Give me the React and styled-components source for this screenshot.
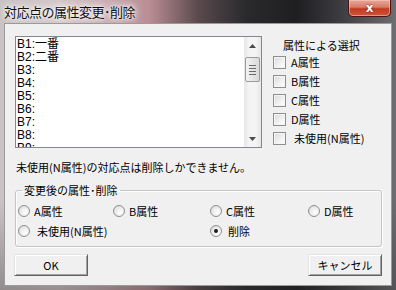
import React from 'react';
import styled, { createGlobalStyle } from 'styled-components';

const Global = createGlobalStyle`
  html, body { margin: 0; padding: 0; }
  body {
    width: 396px; height: 290px; overflow: hidden;
    font-family: "Noto Sans CJK JP", sans-serif;
    color: #000;
  }
`;

const Frame = styled.div`
  width: 396px; height: 290px;
  display: flex; flex-direction: column;
  box-sizing: border-box;
  background:
    linear-gradient(180deg, rgba(0,0,0,0) 0%, rgba(0,0,0,0) 70%, rgba(40,40,40,0.35) 100%),
    linear-gradient(90deg, #c9c2c3 0%, #d3c6c8 15%, #c9aab0 28%, #b88c92 38%, #5a4a4e 50%, #2a2a2d 62%, #1f1f22 75%, #3d3d41 86%, #6d6d72 100%);
`;

const TitleBar = styled.div`
  height: 23px; flex: none;
  display: flex; justify-content: space-between; align-items: flex-start;
  padding-left: 4px;
`;

const TitleText = styled.div`
  font-size: 13px; line-height: 24px;
  letter-spacing: -0.5px;
  color: #111;
  text-shadow: 0 0 6px #fff, 0 0 10px #fff, 0 0 3px #fff;
`;

const CloseButton = styled.div`
  width: 43px; height: 17px; margin-right: 5px;
  box-sizing: border-box;
  border: 1px solid #4a1410; border-top: none;
  border-radius: 0 0 5px 5px;
  background: linear-gradient(180deg, #e8a89a 0%, #d77a66 45%, #c23a22 55%, #d0553a 100%);
  box-shadow: inset 0 0 0 1px rgba(255,210,200,0.5);
  display: flex; align-items: center; justify-content: center;
  color: #fff; font-family: "DejaVu Sans", sans-serif; font-weight: bold; font-size: 12px;
  text-shadow: 0 0 2px #600;
`;

const Body = styled.div`
  flex: 1; display: flex;
  padding: 0 4px 4px 4px;
`;

const Client = styled.div`
  flex: 1;
  background: #f0f0f0;
  border: 1px solid #9a9a9a;
  padding: 12px 9px 0 10px;
  display: flex; flex-direction: column;
  font-size: 11px;
`;

const TopRow = styled.div`
  display: flex; height: 112px; gap: 10px;
`;

const ListBox = styled.div`
  width: 247px; height: 112px; box-sizing: border-box;
  border: 1px solid #828790; background: #fff;
  display: flex;
`;

const Items = styled.div`
  flex: 1; overflow: hidden; padding: 1px 0 0 1px;
`;

const Item = styled.div`
  height: 13px; line-height: 13px;
  font-family: "Liberation Sans", "Noto Sans CJK JP", sans-serif;
  font-size: 12px; white-space: nowrap;
`;

const ScrollBar = styled.div`
  width: 17px; display: flex; flex-direction: column;
  background: linear-gradient(90deg, #e6e6e6, #f4f4f4 30%, #f4f4f4 70%, #e6e6e6);
`;

const Arrow = styled.div`
  height: 17px; flex: none;
  display: flex; align-items: center; justify-content: center;
`;

const Track = styled.div`
  flex: 1; padding-top: 3px;
`;

const Thumb = styled.div`
  margin: 0 1px; height: 25px; box-sizing: border-box;
  border: 1px solid #9b9b9b; border-radius: 2px;
  background: linear-gradient(90deg, #f3f3f3, #e6e6e6 50%, #d9d9d9);
  display: flex; flex-direction: column; align-items: center; justify-content: center; gap: 2px;
`;

const Grip = styled.div`
  width: 7px; height: 1px; background: #6a6a6a;
`;

const SidePanel = styled.div`
  width: 110px; display: flex; flex-direction: column;
`;

const SideHeading = styled.div`
  height: 16px; line-height: 16px; padding: 1px 0 0 11px;
`;

const CheckRow = styled.div`
  height: 19.3px; display: flex; align-items: center;
`;

const CheckBox = styled.div`
  width: 13px; height: 13px; box-sizing: border-box; flex: none;
  margin-left: 1px;
  border: 1px solid #8e8f8f;
  background: linear-gradient(135deg, #dadada, #f6f6f6 70%, #fff);
  box-shadow: inset 0 0 0 1px #f4f4f4;
`;

const Label = styled.span`
  margin-left: ${p => p.$gap || 3}px; white-space: nowrap; line-height: 13px;
`;

const Message = styled.div`
  margin-top: 12px; height: 14px; line-height: 14px; padding-left: 1px;
`;

const Group = styled.fieldset`
  margin: 10px 0 0 0; padding: 2px 0 5px 2px;
  border: 1px solid #c5c5c5; border-radius: 3px;
  box-shadow: inset 1px 1px 0 #fff, 1px 1px 0 #fff;
`;

const Legend = styled.legend`
  margin-left: 4px; padding: 0 2px; font-size: 11px; line-height: 13px;
`;

const RadioGrid = styled.div`
  display: grid;
  grid-template-columns: 95px 97px 98px auto;
  grid-auto-rows: 20px;
  margin-top: 2px;
`;

const RadioItem = styled.div`
  display: flex; align-items: center;
  grid-column: ${p => (p.$wide ? 'span 2' : 'auto')};
`;

const Radio = styled.div`
  width: 12px; height: 12px; box-sizing: border-box; flex: none;
  border-radius: 50%;
  border: 1px solid #8e8f8f;
  background: radial-gradient(circle at 65% 65%, #fff, #e8e8e8 60%, #cfcfcf);
  display: flex; align-items: center; justify-content: center;
  &::after {
    content: "";
    width: 4px; height: 4px; border-radius: 50%;
    background: ${p => (p.$checked ? '#1a1a1a' : 'transparent')};
  }
`;

const ButtonRow = styled.div`
  margin-top: 7px; display: flex; justify-content: space-between;
  margin-left: -1px;
`;

const Button = styled.div`
  width: 74px; height: 22px; box-sizing: border-box;
  background: #f0f0f0;
  border-top: 1px solid #e3e3e3; border-left: 1px solid #e3e3e3;
  border-right: 1px solid #646464; border-bottom: 1px solid #646464;
  box-shadow: inset 1px 1px 0 #fff, inset -1px -1px 0 #a0a0a0;
  display: flex; align-items: center; justify-content: center;
  font-size: 11px;
`;

const items = ['B1:一番', 'B2:二番', 'B3:', 'B4:', 'B5:', 'B6:', 'B7:', 'B8:', 'B9:'];
const checks = ['A属性', 'B属性', 'C属性', 'D属性', '未使用(N属性)'];

export default function App() {
  return (
    <Frame>
      <Global />
      <TitleBar>
        <TitleText>対応点の属性変更･削除</TitleText>
        <CloseButton>x</CloseButton>
      </TitleBar>
      <Body>
        <Client>
          <TopRow>
            <ListBox>
              <Items>
                {items.map(t => <Item key={t}>{t}</Item>)}
              </Items>
              <ScrollBar>
                <Arrow>
                  <svg width="7" height="4" viewBox="0 0 7 4"><path d="M0 4 L3.5 0 L7 4 Z" fill="#4a4a4a" /></svg>
                </Arrow>
                <Track>
                  <Thumb><Grip /><Grip /><Grip /><Grip /></Thumb>
                </Track>
                <Arrow>
                  <svg width="7" height="4" viewBox="0 0 7 4"><path d="M0 0 L3.5 4 L7 0 Z" fill="#4a4a4a" /></svg>
                </Arrow>
              </ScrollBar>
            </ListBox>
            <SidePanel>
              <SideHeading>属性による選択</SideHeading>
              {checks.map((c, i) => (
                <CheckRow key={c}>
                  <CheckBox />
                  <Label $gap={i === 4 ? 8 : 5}>{c}</Label>
                </CheckRow>
              ))}
            </SidePanel>
          </TopRow>
          <Message>未使用(N属性)の対応点は削除しかできません。</Message>
          <Group>
            <Legend>変更後の属性･削除</Legend>
            <RadioGrid>
              <RadioItem><Radio /><Label $gap={4}>A属性</Label></RadioItem>
              <RadioItem><Radio /><Label $gap={4}>B属性</Label></RadioItem>
              <RadioItem><Radio /><Label $gap={4}>C属性</Label></RadioItem>
              <RadioItem><Radio /><Label $gap={4}>D属性</Label></RadioItem>
              <RadioItem $wide><Radio /><Label $gap={7}>未使用(N属性)</Label></RadioItem>
              <RadioItem><Radio $checked /><Label $gap={6}>削除</Label></RadioItem>
            </RadioGrid>
          </Group>
          <ButtonRow>
            <Button>OK</Button>
            <Button>キャンセル</Button>
          </ButtonRow>
        </Client>
      </Body>
    </Frame>
  );
}
